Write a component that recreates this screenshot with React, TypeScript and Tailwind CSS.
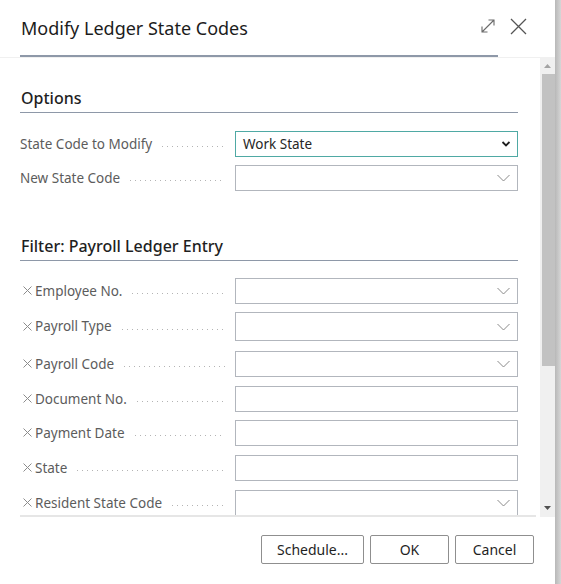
const font = { fontFamily: '"Noto Sans", "Open Sans", sans-serif' }

type Field = {
  label: string
  value?: string
  lookup?: boolean
  focused?: boolean
  removable?: boolean
  h?: string
  mb?: string
}

const options: Field[] = [
  { label: 'State Code to Modify', value: 'Work State', lookup: true, focused: true, mb: 'mb-[8px]' },
  { label: 'New State Code', lookup: true },
]

const filters: Field[] = [
  { label: 'Employee No.', lookup: true, removable: true, mb: 'mb-[8px]' },
  { label: 'Payroll Type', lookup: true, removable: true, h: 'h-[29px]', mb: 'mb-[10px]' },
  { label: 'Payroll Code', lookup: true, removable: true, mb: 'mb-[9px]' },
  { label: 'Document No.', removable: true, mb: 'mb-[8px]' },
  { label: 'Payment Date', removable: true, mb: 'mb-[9px]' },
  { label: 'State', removable: true, mb: 'mb-[9px]' },
  { label: 'Resident State Code', lookup: true, removable: true },
]

function Chevron({ bold }: { bold?: boolean }) {
  if (bold) {
    return (
      <svg width="10" height="7" viewBox="0 0 10 7" className="absolute right-[6px] top-1/2 -translate-y-1/2">
        <path d="M1.5 1.5 L5 5 L8.5 1.5" fill="none" stroke="#1f1f1f" strokeWidth="1.8" />
      </svg>
    )
  }
  return (
    <svg width="13" height="8" viewBox="0 0 13 8" className="absolute right-[7px] top-1/2 -translate-y-1/2">
      <path d="M0.5 1 L6.5 7 L12.5 1" fill="none" stroke="#8a8a8a" strokeWidth="1" />
    </svg>
  )
}

// small "clear filter" cross in front of filter labels
function ClearMark() {
  return (
    <svg width="9" height="9" viewBox="0 0 9 9" className="ml-[3px] mr-[3px] -mt-[1px] shrink-0">
      <path d="M0.5 0.5 L8.5 8.5 M8.5 0.5 L0.5 8.5" fill="none" stroke="#8c8c8c" strokeWidth="1" />
    </svg>
  )
}

function Row({ field }: { field: Field }) {
  return (
    <div className={`flex items-center ${field.mb ?? ''}`}>
      <div className="flex items-center w-[215px] pr-[10px] text-[13.5px] text-[#5c5c5c]">
        {field.removable && <ClearMark />}
        <span className="whitespace-nowrap">{field.label}</span>
        <span className="flex-1 ml-[10px] mt-[5px] h-px bg-[linear-gradient(to_right,#b4b4b4_1px,transparent_1px)] bg-[length:5px_1px] bg-repeat-x" />
      </div>
      <div
        className={`relative w-[283px] ${field.h ?? 'h-[26px]'} border ${
          field.focused ? 'border-[#4fa9a4]' : 'border-[#b2b6bd]'
        } bg-white flex items-center px-[7px] text-[13.5px] text-[#262626]`}
      >
        {field.value}
        {field.lookup && <Chevron bold={field.focused} />}
      </div>
    </div>
  )
}

function Section({ title }: { title: string }) {
  return (
    <div className="pr-[22px]">
      <div className="text-[16px] font-medium text-[#1f1f1f] leading-[22px] pb-[3px] pl-px border-b border-[#8e98a8]">
        {title}
      </div>
    </div>
  )
}

export default function App() {
  return (
    <div className="w-[561px] h-[584px] flex bg-white" style={font}>
      <div className="w-[555px] flex flex-col">
        {/* header */}
        <div className="h-[58px] border-b border-[#f0f0f0] flex flex-col">
          <div className="flex items-center h-[55px] pl-[21px] pr-[28px]">
            <h1 className="text-[18px] text-[#1c1c1c] flex-1 mt-[1px]">Modify Ledger State Codes</h1>
            <svg width="16" height="16" viewBox="0 0 16 16" className="mr-[14px] -mt-[3px]">
              <path d="M2 14 L14 2 M8.5 2 H14 V7.5 M2 8.5 V14 H7.5" fill="none" stroke="#6a6a6a" strokeWidth="1.1" />
            </svg>
            <svg width="17" height="17" viewBox="0 0 17 17" className="-mt-[3px]">
              <path d="M1 1 L16 16 M16 1 L1 16" fill="none" stroke="#555" strokeWidth="1.3" />
            </svg>
          </div>
          <div className="ml-[20px] w-[478px] h-[2px] bg-[#8e98a8]" />
        </div>

        {/* body */}
        <div className="flex h-[459px]">
          <div className="flex-1 overflow-hidden pl-[20px] relative">
            <div className="pt-[29px]">
              <Section title="Options" />
              <div className="pt-[18px]">
                {options.map((f) => (
                  <Row key={f.label} field={f} />
                ))}
              </div>
              <div className="pt-[44px]">
                <Section title="Filter: Payroll Ledger Entry" />
              </div>
              <div className="pt-[17px]">
                {filters.map((f) => (
                  <Row key={f.label} field={f} />
                ))}
              </div>
            </div>
            <div className="absolute left-[20px] right-[4px] bottom-0 h-[2px] bg-[#e6e6e6]" />
          </div>

          {/* scrollbar */}
          <div className="w-[15px] bg-[#f0f0f0] flex flex-col items-center">
            <div className="h-[16px] flex items-center justify-center">
              <svg width="7" height="4" viewBox="0 0 7 4">
                <path d="M0 4 L3.5 0 L7 4 Z" fill="#a3a3a3" />
              </svg>
            </div>
            <div className="w-[13px] ml-[1px] h-[292px] bg-[#c2c2c2]" />
            <div className="flex-1" />
            <div className="h-[18px] flex items-center justify-center">
              <svg width="7" height="4" viewBox="0 0 7 4">
                <path d="M0 0 L3.5 4 L7 0 Z" fill="#505050" />
              </svg>
            </div>
          </div>
        </div>

        {/* footer */}
        <div className="flex justify-end gap-[6px] pr-[21px] pt-[18px]">
          <button className="w-[103px] h-[29px] border border-[#8f8f8f] rounded-[2px] text-[14px] text-[#1f1f1f]">
            Schedule...
          </button>
          <button className="w-[79px] h-[29px] border border-[#8f8f8f] rounded-[2px] text-[14px] text-[#1f1f1f]">
            OK
          </button>
          <button className="w-[79px] h-[29px] border border-[#8f8f8f] rounded-[2px] text-[14px] text-[#1f1f1f]">
            Cancel
          </button>
        </div>
      </div>
      <div className="flex-1 bg-[linear-gradient(to_right,#b8b8b8,#d6d6d6)]" />
    </div>
  )
}
